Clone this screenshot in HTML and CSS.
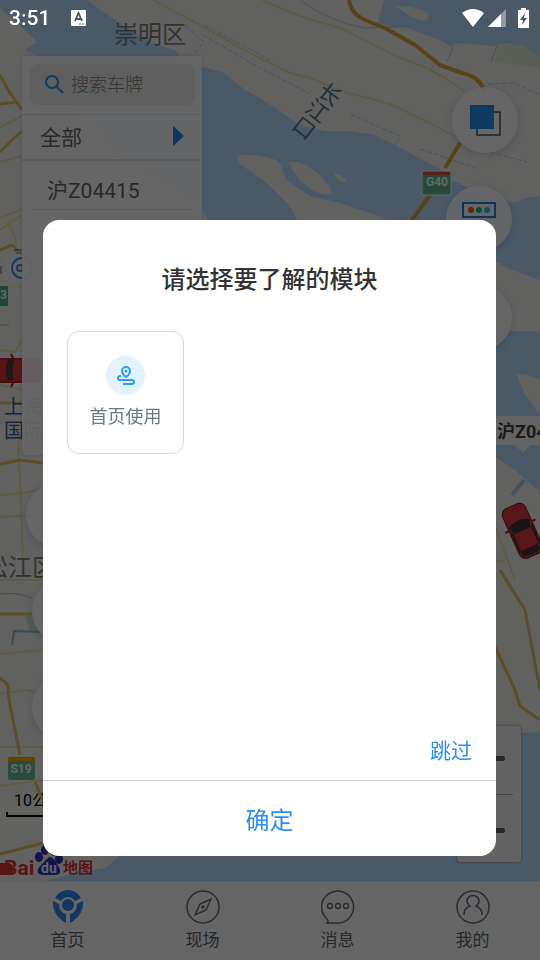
FILE: index.html
```html
<!DOCTYPE html>
<html lang="zh-CN">
<head>
  <meta charset="UTF-8" />
  <meta name="viewport" content="width=device-width, initial-scale=1" />
  <title>首页</title>
  <link rel="stylesheet" href="styles.css">
</head>
<body>
  <div class="app">
    <main class="map">
      <svg class="map-canvas" viewBox="0 0 540 881" preserveAspectRatio="xMinYMin slice" aria-hidden="true">
        <rect width="540" height="881" fill="#f6f5f2" />
        <!-- water -->
        <g fill="#bbdcff">
          <path d="M0 0H87L115 20 150 42 175 50 184 62 203 67 222 72 245 90 260 98 275 108 300 125 325 131 350 131 375 135 410 153 440 169 452 180 480 193 512 203 526 198 540 196V280L513 270 496 262 385 220H208L202 207 120 160 38 56 25 50 37 42 22 27 0 8Z" />
          <path d="M384 0 378 23 395 28 405 27 440 40 452 47 456 43 495 46 510 43 540 58V0Z" />
          <path d="M496 331H540V492L516 471 496 457Z" />
          <path d="M45 881 70 874 105 868 120 856 496 730 520 733 540 732V881Z" />
          <path d="M22 440H43V455H22Z" opacity=".6" />
        </g>
        <!-- islands -->
        <g fill="#f6f5f2">
          <path d="M237 156Q250 152 276 160Q283 166 286 180L310 196 340 203 385 218V222H298L289 205 268 184 240 164Z" />
          <path d="M288 162Q305 160 323 178Q333 190 331 194Q318 197 299 180Z" />
          <path d="M334 174Q342 173 347 182Q340 184 334 174Z" />
          <path d="M396 6Q421 7 428 14Q431 20 424 21Q410 18 396 6Z" />
          <path d="M517 375Q524 372 540 380V415Q522 394 517 375Z" />
        </g>
        <path d="M497 47Q520 39 540 57V68L495 62Z" fill="#e0efd9" />
        <path d="M25 616 33 610 43 625V632H30Z" fill="#c9e7c8" />
        <g class="creek">
          <path d="M300 0Q330 22 365 28L396 27M453 48 447 61M497 45 491 62" />
          <path d="M270 73 310 94M350 114 400 136 394 148M420 149 476 168M488 84 515 83 540 95M203 35 270 74M185 25 204 42 195 53M205 25 270 60M490 152 527 162" stroke-dasharray="5 2" />
          <path d="M512 495 524 480" stroke-width="4" />
          <path d="M43 632 14 631 12 645" class="canal" />
        </g>
        <!-- local roads -->
        <g class="road-minor">
          <path d="M262 0 300 16 340 28 400 58 425 67 445 78 465 92M153 0 200 25 250 53 290 73 310 78 345 92 390 104 430 123 455 137M436 59 430 72" />
          <path d="M0 127 22 116M0 162 22 156M0 218 22 209M0 230 22 215M8 220 16 240 12 275 22 290M0 350 15 352 22 340M0 385 22 390M18 440 21 500 23 566M0 495 25 493 43 488M0 517 20 516 43 518M0 580H43M0 654 43 650M0 747H43M0 786 43 780M0 694 25 690 43 693M496 528 515 580M496 562 505 560" />
        </g>
        <g class="road">
          <path d="M0 75 8 90 22 110M0 104 17 102M0 152 10 142 22 131M0 250 12 245 22 254M0 403H43M0 464 20 460 43 463M0 614H32M0 678 8 685 9 700 16 735 20 755M35 782 43 800M0 854 43 843M500 570 525 610 540 690M492 640 515 690 520 706 540 720" />
        </g>
        <!-- highways -->
        <path class="highway" d="M349 0Q351 14 365 20L385 28 415 45 440 65 462 73Q481 77 484 92M460 143 445 168M430 195 412 220" />
        <path d="M0 325H9M0 594Q18 592 32 598" class="rail" />
        <g class="place">
          <text x="114" y="43">崇明区</text>
          <text x="-16" y="576">松江区</text>
        </g>
        <g class="river-name" text-anchor="middle">
          <text transform="translate(330 94) rotate(38)" y="8">长</text>
          <text transform="translate(317 111) rotate(38)" y="8">江</text>
          <text transform="translate(304 128) rotate(38)" y="8">口</text>
        </g>
        <g class="landmark">
          <text x="4" y="414">上海</text>
          <text x="4" y="438">国际</text>
        </g>
        <!-- road shields -->
        <g class="shield">
          <rect x="422" y="171" width="29" height="24" rx="2" fill="#62b894" stroke="#fff" />
          <path d="M423 172H450V175H423Z" fill="#dd5258" />
          <text x="437" y="186" text-anchor="middle">G40</text>
          <rect x="8" y="757" width="27" height="23" rx="2" fill="#6dbba2" />
          <path d="M8 758H35V761H8Z" fill="#eeb100" />
          <text x="21" y="773" text-anchor="middle">S19</text>
          <rect x="-10" y="286" width="18" height="20" fill="#53af91" />
          <text x="0" y="299">3</text>
        </g>
        <!-- vehicles -->
        <g>
          <path d="M-8 358H38Q43 359 43 370Q43 382 38 383H-8Z" fill="#e0303a" />
          <path d="M8 360H14Q11 370 14 380H8Q3 370 8 360Z" fill="#4a3c40" />
          <path d="M0 359H22M0 382H22" stroke="#7a2026" />
          <path d="M11 354 13 358M11 387 13 383" stroke="#ad1b22" stroke-width="2" />
        </g>
        <g transform="translate(522 531) rotate(-24)">
          <rect x="-12" y="-27" width="25" height="54" rx="7" fill="#de3a44" stroke="#721c21" />
          <path d="M-11-8Q0-15 12-8L9 0H-8ZM-8 18H9L11 24Q0 27-10 24Z" fill="#43363c" />
          <path d="M-10-2V19M11-2V19" stroke="#5a2a30" stroke-width="2" />
          <path d="M-12-5H-16M13-5H17" stroke="#b12028" stroke-width="2" />
        </g>
        <path d="M480 416H540V445H531L523 453 515 445H480Z" fill="#fbfbfb" />
        <text class="plate-label" x="497" y="438">沪Z04415</text>
        <!-- marker left of the list -->
        <g fill="none">
          <rect x="2" y="252" width="34" height="32" rx="16" fill="#fafafa" />
          <circle cx="22" cy="268" r="10" stroke="#3b91df" stroke-width="2" />
          <circle cx="20" cy="268" r="3" stroke="#3b91df" stroke-width="2" />
          <path d="M14 250H24M16 253H22M1 266V274" stroke="#667" />
        </g>
        <!-- scale bar and map logo -->
        <text class="scale" x="14" y="806">10公里</text>
        <path d="M7 812V816H75V812" fill="none" stroke="#000" stroke-width="2" />
        <g class="logo">
          <rect x="-10" y="863" width="23" height="12" rx="5" />
          <text x="4" y="875" font-size="21">Bai</text>
          <g fill="#3535c5">
            <ellipse cx="39" cy="857" rx="4" ry="5" />
            <ellipse cx="45" cy="850" rx="4" ry="5" />
            <ellipse cx="54" cy="851" rx="4" ry="5" />
            <ellipse cx="59" cy="859" rx="4" ry="5" />
            <path d="M49 857Q54 857 57 864Q64 875 55 875H43Q34 874 40 866Z" />
          </g>
          <text x="41" y="873" font-size="14" class="logo-du">du</text>
          <text x="63" y="873" font-size="15">地图</text>
        </g>
      </svg>

      <section class="vehicles">
        <div class="search">
          <svg width="20" height="20" viewBox="0 0 20 20" fill="none" stroke="#2795ef" stroke-width="2"><circle cx="8" cy="7" r="6" /><path d="M12 11 19 18" /></svg>
          <input type="text" placeholder="搜索车牌" aria-label="搜索车牌">
        </div>
        <button class="group">全部<span class="arrow"></span></button>
        <a class="vehicle" href="#">沪Z04415</a>
      </section>

      <div class="tools tools-right">
        <button class="round layers" aria-label="图层">
          <svg width="32" height="32" viewBox="0 0 32 32"><path d="M8 8H31V31H8Z" fill="none" stroke="#46515c" stroke-width="1.5" /><path d="M1 1H25V25H1Z" fill="#2795ef" /></svg>
        </button>
        <button class="round" aria-label="路况">
          <svg width="34" height="34" viewBox="0 0 34 34"><path d="M1 1H33V15H1Z" fill="none" stroke="#2b7de0" stroke-width="2" /><circle cx="9" cy="8" r="3" fill="#ed542c" /><circle cx="17" cy="8" r="3" fill="#23bd5f" /><circle cx="25" cy="8" r="3" fill="#29c6df" /></svg>
        </button>
        <button class="round" aria-label="定位"></button>
      </div>
      <div class="tools tools-left">
        <button class="round" aria-label="刷新"></button>
        <button class="round" aria-label="轨迹"></button>
        <button class="round" aria-label="围栏"></button>
      </div>
      <div class="zoom">
        <button aria-label="放大"><span></span></button>
        <button aria-label="缩小"><span></span></button>
      </div>
    </main>

    <nav class="tabs">
      <a href="#">
        <svg width="34" height="34" viewBox="0 0 34 34" fill="#318bf3"><circle cx="17" cy="15" r="6" /><path d="M4 8Q9 0 17 0T30 8L24 11Q21 7 17 7T10 11ZM2 11 8 14Q8 22 15 24V33Q1 25 2 11ZM32 11 26 14Q26 22 19 24V33Q33 25 32 11Z" /></svg>
        首页
      </a>
      <a href="#">
        <svg class="line" width="34" height="34" viewBox="0 0 34 34"><circle cx="17" cy="17" r="16" /><path d="M25 9 20 20 9 25 14 14Z" /><circle cx="17" cy="17" r="1" /></svg>
        现场
      </a>
      <a href="#">
        <svg class="line" width="34" height="34" viewBox="0 0 34 34"><path d="M6 29A16 16 0 1 1 17 33H6Q8 31 6 29Z" /><circle cx="9" cy="16" r="2.5" /><circle cx="17" cy="16" r="2.5" /><circle cx="25" cy="16" r="2.5" /></svg>
        消息
      </a>
      <a href="#">
        <svg class="line" width="34" height="34" viewBox="0 0 34 34"><circle cx="17" cy="17" r="16" /><path d="M8 25Q8 18 14 16Q11 14 11 11A6 5.500 0 0 1 23 11Q23 14 20 16Q26 18 26 25" /></svg>
        我的
      </a>
    </nav>
  </div>

  <div class="mask">
    <div class="dialog" role="dialog" aria-labelledby="dialog-title">
      <h1 id="dialog-title">请选择要了解的模块</h1>
      <div class="modules">
        <button class="module">
          <span class="module-icon">
            <svg width="20" height="20" viewBox="0 0 20 20" fill="none" stroke="#2f9bfa" stroke-width="2"><path d="M10 11Q6 8 6 5A4 4 0 0 1 14 5Q14 8 10 11Z" /><circle cx="10" cy="5" r="1.500" fill="#2f9bfa" stroke="none" /><path d="M5 10Q2 10 2 12T4 14H16Q18 14 18 16T16 18H7" /></svg>
          </span>
          首页使用
        </button>
      </div>
      <button class="skip">跳过</button>
      <button class="confirm">确定</button>
    </div>
  </div>

  <header class="status">
    <span>3:51</span>
    <svg class="input-mode" width="15" height="16" viewBox="0 0 15 16"><rect width="15" height="16" rx="1" fill="#fff" /><path d="M4 11 7.500 3 11 11M5 9H10" fill="none" stroke="#465460" stroke-width="1.800" /><path d="M8 14H10M11 14H13" stroke="#465460" /></svg>
    <svg width="68" height="20" viewBox="0 0 68 20">
      <path d="M0 5Q11-3 22 5L11 19Z" fill="#fff" />
      <path d="M26 19 44 1V19Z" fill="#929ba3" /><path d="M26 19 39 6V19Z" fill="#fff" />
      <path d="M56 2H59V0H64V2H67V20H56Z" fill="#fff" /><path d="M63 5 58 12H61L60 17 65 10H62Z" fill="#465460" />
    </svg>
  </header>
</body>
</html>
```
FILE: styles.css
```css
* {
  box-sizing: border-box;
}

body {
  margin: 0;
  font-family: Roboto, "Noto Sans CJK SC", sans-serif;
  color: #5c6a76;
}

button,
input {
  font: inherit;
  color: inherit;
  border: none;
  background: none;
  padding: 0;
}

button {
  cursor: pointer;
}

a {
  color: inherit;
  text-decoration: none;
}

svg {
  display: block;
  flex-shrink: 0;
}

.app {
  display: flex;
  flex-direction: column;
  min-height: 100vh;
}

/* map */
.map {
  flex: 1;
  position: relative;
  overflow: hidden;
}

.map-canvas {
  position: absolute;
  width: 100%;
  height: 100%;
}

.map-canvas path {
  stroke-linejoin: round;
}

.creek {
  fill: none;
  stroke: #afcfed;
  stroke-width: 1;
}

.canal {
  stroke: #8bb7e9;
  stroke-width: 2;
}

.road-minor {
  fill: none;
  stroke: #f3e0af;
  stroke-width: 2;
}

.road {
  fill: none;
  stroke: #e8c46a;
  stroke-width: 3;
}

.highway {
  fill: none;
  stroke: #d8a83b;
  stroke-width: 4;
}

.rail {
  fill: none;
  stroke: #b5b5b5;
}

.place {
  fill: #76827f;
  font-size: 24px;
}

.river-name {
  fill: #547888;
  font-size: 22px;
}

.landmark {
  fill: #2d6398;
  font-size: 20px;
}

.shield text {
  fill: #fff;
  font-size: 12px;
  font-weight: 700;
}

.plate-label {
  font-size: 18px;
  font-weight: 700;
  fill: #444;
}

.scale {
  font-size: 16px;
  fill: #000;
}

.logo {
  fill: #df3338;
  font-weight: 700;
}

.logo-du {
  fill: #fff;
}

/* vehicle list */
.vehicles {
  position: absolute;
  top: 56px;
  left: 22px;
  width: 180px;
  height: 399px;
  background: rgba(255, 255, 255, 0.92);
  border-radius: 4px;
  box-shadow: 0 0 4px rgba(80, 120, 150, 0.3);
}

.search {
  display: flex;
  align-items: center;
  gap: 7px;
  height: 41px;
  margin: 8px 7px 9px 8px;
  padding-left: 14px;
  border-radius: 8px;
  background: #ededed;
}

.search input {
  width: 100%;
  min-width: 0;
  font-size: 18px;
  font-weight: 300;
}

.search input::placeholder {
  color: #808080;
  opacity: 1;
}

.group {
  display: flex;
  align-items: center;
  justify-content: space-between;
  width: 100%;
  height: 47px;
  padding: 0 18px 2px;
  border-top: 1px solid #e2e2e2;
  border-bottom: 2px solid #e2e2e2;
  font-size: 21px;
}

.arrow {
  border: 10px solid transparent;
  border-left: 11px solid #2587db;
  border-right: none;
}

.vehicle {
  display: flex;
  align-items: center;
  height: 49px;
  margin: 0 10px;
  padding: 10px 0 2px 15px;
  border-bottom: 1px solid #e2e2e2;
  font-size: 21px;
}

/* floating buttons */
.tools {
  position: absolute;
  display: flex;
  flex-direction: column;
}

.tools-right {
  top: 87px;
  right: 28px;
  gap: 33px;
}

.tools-left {
  top: 482px;
  left: 32px;
  gap: 30px;
}

.round {
  display: flex;
  align-items: center;
  justify-content: center;
  width: 66px;
  height: 66px;
  border-radius: 50%;
  background: rgba(255, 255, 255, 0.92);
  box-shadow: 0 2px 8px rgba(70, 120, 180, 0.3);
}

.tools-left .round:first-child {
  margin-left: -6px;
}

.layers {
  margin-left: 6px;
  margin-right: -6px;
}

.zoom {
  position: absolute;
  right: 19px;
  bottom: 19px;
  display: flex;
  flex-direction: column;
  width: 64px;
  padding: 0 8px;
  border-radius: 4px;
  background: #f8f8f8;
  box-shadow: 0 0 3px #888;
}

.zoom button {
  display: flex;
  align-items: center;
  justify-content: center;
  height: 68px;
  padding-bottom: 4px;
}

.zoom button + button {
  padding: 4px 0 0;
  border-top: 1px solid #aaa;
}

.zoom span {
  width: 32px;
  height: 5px;
  border-radius: 2px;
  background: #666;
}

/* bottom tabs */
.tabs {
  display: grid;
  grid-template-columns: repeat(4, 1fr);
  height: 79px;
  padding-top: 8px;
  border-top: 1px solid #eee;
  background: #fff;
}

.tabs a {
  display: flex;
  flex-direction: column;
  align-items: center;
  gap: 4px;
  font-size: 17px;
  line-height: 24px;
}

.line {
  fill: none;
  stroke: #66717e;
  stroke-width: 1.5;
}

/* dialog */
.mask {
  position: fixed;
  inset: 0;
  padding: 220px 44px 104px 43px;
  background: rgba(0, 0, 0, 0.6);
}

.dialog {
  display: flex;
  flex-direction: column;
  height: 100%;
  border-radius: 16px;
  background: #fff;
}

.dialog h1 {
  margin: 42px 0 33px;
  font-size: 24px;
  line-height: 36px;
  font-weight: 500;
  text-align: center;
  color: #333;
}

.modules {
  flex: 1;
  padding: 0 24px;
}

.module {
  display: flex;
  flex-direction: column;
  align-items: center;
  gap: 9px;
  width: 117px;
  height: 123px;
  padding-top: 24px;
  border: 1px solid #d7dade;
  border-radius: 12px;
  font-size: 18px;
  line-height: 26px;
  color: #6b7884;
}

.module-icon {
  display: flex;
  align-items: center;
  justify-content: center;
  width: 39px;
  height: 39px;
  border-radius: 50%;
  background: #e2f2ff;
}

.skip {
  align-self: flex-end;
  margin: 0 24px 13px;
  font-size: 21px;
  line-height: 31px;
  color: #2c8dfa;
}

.confirm {
  height: 76px;
  padding-bottom: 1px;
  border-top: 1px solid #d5d5d5;
  font-size: 24px;
  color: #2c8dfa;
}

/* system status bar */
.status {
  position: fixed;
  top: 0;
  left: 0;
  right: 0;
  display: flex;
  align-items: center;
  height: 36px;
  padding: 0 10px 0 9px;
  color: #fff;
  font-size: 21px;
  font-weight: 500;
}

.input-mode {
  margin: 0 auto 0 21px;
}
```
